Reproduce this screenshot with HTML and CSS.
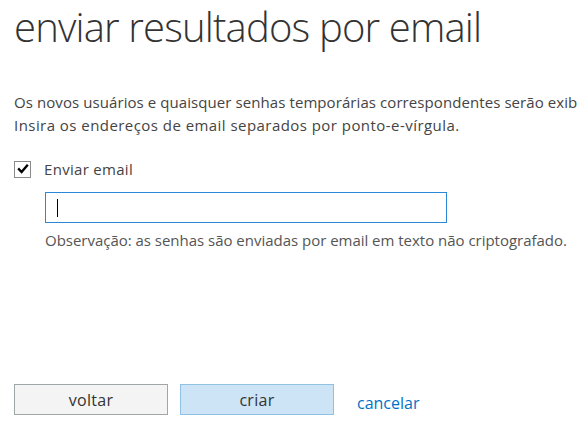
FILE: index.html
```html
<!DOCTYPE html>
<html lang="pt">
<head>
<meta charset="utf-8">
<title>enviar resultados por email</title>
<link rel="stylesheet" href="styles.css">
</head>
<body>
<main class="page">
  <h1 class="title">enviar resultados por email</h1>
  <div class="intro">
    <p class="line line-first">Os novos usuários e quaisquer senhas temporárias correspondentes serão exibidos na próxima página.</p>
    <p class="line line-second">Insira os endereços de email separados por ponto-e-vírgula.</p>
  </div>
  <label class="check-row">
    <span class="checkbox" aria-hidden="true">
      <svg width="12" height="12" viewBox="0 0 12 12"><path d="M2 6.2 L4.6 9 L10 2.6" fill="none" stroke="#000" stroke-width="2.4" stroke-linecap="square"/></svg>
    </span>
    <span class="check-label">Enviar email</span>
  </label>
  <div class="field">
    <div class="input"><span class="caret"></span></div>
    <p class="note">Observação: as senhas são enviadas por email em texto não criptografado.</p>
  </div>
  <div class="actions">
    <button class="btn btn-back" type="button">voltar</button>
    <button class="btn btn-primary" type="button">criar</button>
    <a class="link" href="#">cancelar</a>
  </div>
</main>
</body>
</html>
```
FILE: styles.css
```css
html, body {
  margin: 0;
  padding: 0;
  background: #fff;
  overflow: hidden;
}
body {
  font-family: "Open Sans", "Noto Sans", sans-serif;
  color: #333;
  width: 577px;
  height: 424px;
}
.page {
  padding: 0 0 0 14px;
  display: flex;
  flex-direction: column;
  height: 424px;
  box-sizing: border-box;
  overflow: hidden;
}
.title {
  margin: 0;
  padding-top: 3px;
  font-weight: 300;
  font-size: 40px;
  line-height: 48px;
  color: #333;
  letter-spacing: -0.83px;
  white-space: nowrap;
}
.intro {
  margin-top: 40px;
}
.line {
  margin: 0;
  font-size: 15px;
  line-height: 23px;
  color: #444;
  white-space: nowrap;
}
.line-first {
  letter-spacing: 0.08px;
}
.line-second {
  letter-spacing: 0.45px;
}
.check-row {
  display: flex;
  align-items: center;
  gap: 13px;
  margin-top: 23px;
  height: 18px;
}
.checkbox {
  width: 17px;
  height: 17px;
  border: 1px solid #8a8a8a;
  box-sizing: border-box;
  display: flex;
  align-items: center;
  justify-content: center;
  background: #fff;
}
.check-label {
  font-size: 15px;
  color: #444;
  letter-spacing: 0.3px;
}
.field {
  margin-left: 31px;
  margin-top: 14px;
}
.input {
  width: 402px;
  height: 31px;
  box-sizing: border-box;
  border: 1px solid #2b88d8;
  display: flex;
  align-items: center;
  padding-left: 11px;
}
.caret {
  width: 1px;
  height: 18px;
  background: #000;
}
.note {
  margin: 7px 0 0;
  font-size: 15px;
  line-height: 20px;
  color: #555;
  white-space: nowrap;
  letter-spacing: -0.02px;
}
.actions {
  margin-top: auto;
  margin-bottom: 9px;
  display: flex;
  align-items: center;
  gap: 12px;
}
.btn {
  width: 154px;
  height: 31px;
  box-sizing: border-box;
  font-family: inherit;
  font-size: 16px;
  letter-spacing: 0.3px;
  color: #333;
  padding: 0;
  cursor: pointer;
}
.btn-back {
  background: #f4f4f4;
  border: 1px solid #a0a6a8;
}
.btn-primary {
  background: #cde4f7;
  border: 1px solid #8fc1e2;
}
.link {
  margin-left: 11px;
  margin-top: 6px;
  font-size: 16px;
  color: #0072c6;
  text-decoration: none;
}
```
